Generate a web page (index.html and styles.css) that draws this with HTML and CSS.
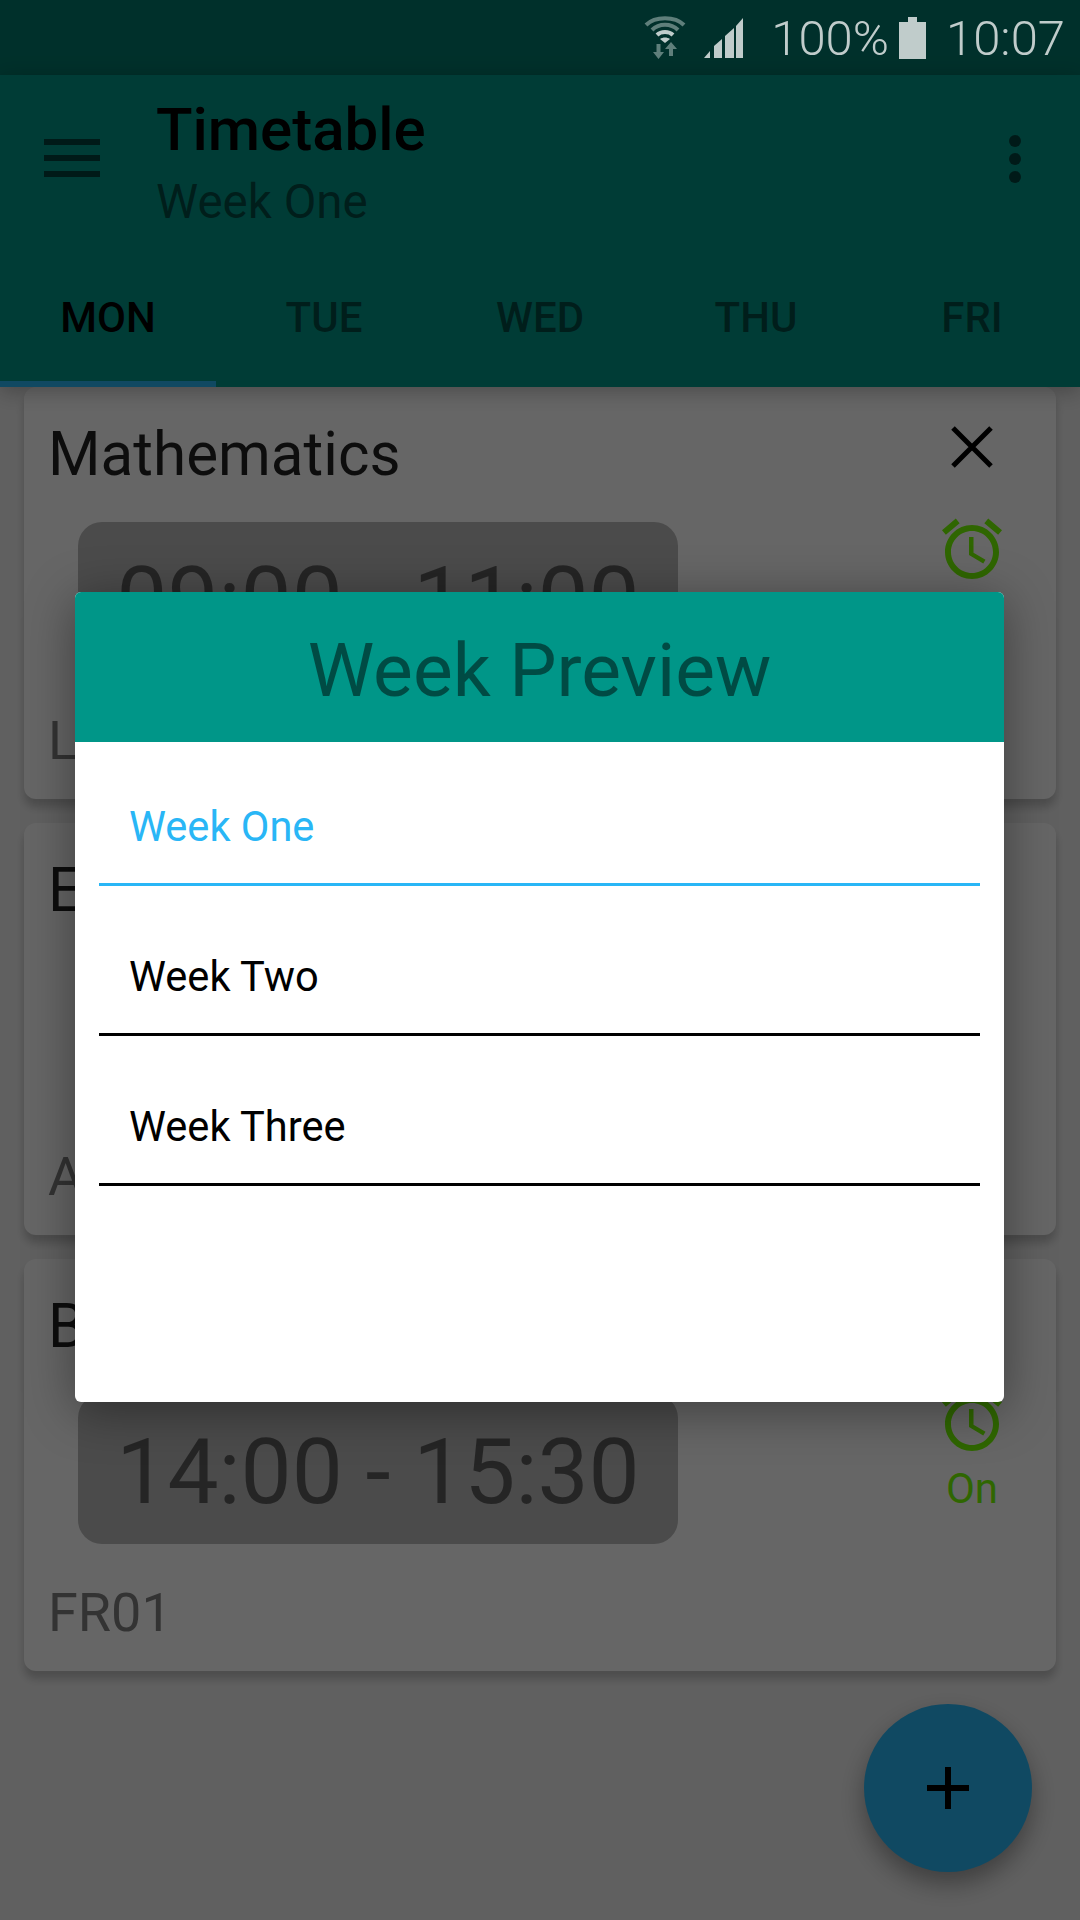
FILE: index.html
```html
<!DOCTYPE html>
<html lang="en">
<head>
  <meta charset="UTF-8">
  <meta name="viewport" content="width=device-width, initial-scale=1.0">
  <title>Timetable</title>
  <link rel="stylesheet" href="styles.css">
</head>
<body>
  <div class="status-bar">
    <svg class="icon-wifi" viewBox="0 0 42 44" width="42" height="44">
      <path class="wifi-dim" d="M2 9 C11 0 31 0 40 9" />
      <path class="wifi-dim" d="M8 14 C15 7 27 7 34 14" />
      <path class="wifi-inner" d="M13 19 C17 15 25 15 29 19" />
      <path class="wifi-dot" d="M21 27 L16 23 C19 21 23 21 26 23 Z" />
      <path class="wifi-arrow" d="M14.5 43 L9 36 H12.5 V28 H16.5 V36 H20 Z" />
      <path class="wifi-arrow" d="M27 26 L33 33 H29 V40 H25 V33 H21 Z" />
    </svg>
    <svg class="icon-signal" viewBox="0 0 40 40" width="40" height="40">
      <path d="M1 40 L7 33 V40 Z" />
      <path d="M11 40 V28 L19 21 V40 Z" />
      <path d="M22 40 V18 L31 10 V40 Z" />
      <path d="M33 40 V8 L40 0 V40 Z" />
    </svg>
    <span class="status-text battery-text">100%</span>
    <svg class="icon-battery" viewBox="0 0 27 42" width="27" height="42">
      <path d="M9 0 H18 V5 H27 V42 H0 V5 H9 Z" />
    </svg>
    <span class="status-text time-text">10:07</span>
  </div>

  <header class="app-bar">
    <div class="toolbar">
      <div class="menu-icon"><span></span><span></span><span></span></div>
      <div class="toolbar-titles">
        <div class="toolbar-title">Timetable</div>
        <div class="toolbar-subtitle">Week One</div>
      </div>
      <div class="more-icon"><span></span><span></span><span></span></div>
    </div>
    <nav class="tabs">
      <div class="tab active">MON</div>
      <div class="tab">TUE</div>
      <div class="tab">WED</div>
      <div class="tab">THU</div>
      <div class="tab">FRI</div>
    </nav>
  </header>

  <main class="card-list">
    <section class="card">
      <div class="card-main">
        <div class="card-title">Mathematics</div>
        <div class="time-box">09:00 - 11:00</div>
        <div class="card-room">L12</div>
      </div>
      <div class="card-side">
        <svg class="icon-close" viewBox="0 0 42 42" width="42" height="42"><path d="M2 2 L40 40 M40 2 L2 40" /></svg>
        <svg class="icon-alarm" viewBox="0 0 24 24" width="72" height="72"><path d="M22 5.72l-4.6-3.86-1.29 1.53 4.6 3.86L22 5.72zM7.88 3.39L6.6 1.86 2 5.71l1.29 1.53 4.59-3.85zM12.5 8H11v6l4.75 2.85.75-1.23-4-2.37V8zM12 4c-4.97 0-9 4.03-9 9s4.03 9 9 9 9-4.03 9-9-4.03-9-9-9zm0 16c-3.87 0-7-3.13-7-7s3.13-7 7-7 7 3.13 7 7-3.13 7-7 7z" /></svg>
        <div class="alarm-label">On</div>
      </div>
    </section>
    <section class="card">
      <div class="card-main">
        <div class="card-title">English</div>
        <div class="time-box">11:30 - 13:00</div>
        <div class="card-room">A03</div>
      </div>
      <div class="card-side">
        <svg class="icon-close" viewBox="0 0 42 42" width="42" height="42"><path d="M2 2 L40 40 M40 2 L2 40" /></svg>
        <svg class="icon-alarm" viewBox="0 0 24 24" width="72" height="72"><path d="M22 5.72l-4.6-3.86-1.29 1.53 4.6 3.86L22 5.72zM7.88 3.39L6.6 1.86 2 5.71l1.29 1.53 4.59-3.85zM12.5 8H11v6l4.75 2.85.75-1.23-4-2.37V8zM12 4c-4.97 0-9 4.03-9 9s4.03 9 9 9 9-4.03 9-9-4.03-9-9-9zm0 16c-3.87 0-7-3.13-7-7s3.13-7 7-7 7 3.13 7 7-3.13 7-7 7z" /></svg>
        <div class="alarm-label">On</div>
      </div>
    </section>
    <section class="card">
      <div class="card-main">
        <div class="card-title">Biology</div>
        <div class="time-box">14:00 - 15:30</div>
        <div class="card-room">FR01</div>
      </div>
      <div class="card-side">
        <svg class="icon-close" viewBox="0 0 42 42" width="42" height="42"><path d="M2 2 L40 40 M40 2 L2 40" /></svg>
        <svg class="icon-alarm" viewBox="0 0 24 24" width="72" height="72"><path d="M22 5.72l-4.6-3.86-1.29 1.53 4.6 3.86L22 5.72zM7.88 3.39L6.6 1.86 2 5.71l1.29 1.53 4.59-3.85zM12.5 8H11v6l4.75 2.85.75-1.23-4-2.37V8zM12 4c-4.97 0-9 4.03-9 9s4.03 9 9 9 9-4.03 9-9-4.03-9-9-9zm0 16c-3.87 0-7-3.13-7-7s3.13-7 7-7 7 3.13 7 7-3.13 7-7 7z" /></svg>
        <div class="alarm-label">On</div>
      </div>
    </section>
  </main>

  <button class="fab"><span class="fab-plus"></span></button>

  <div class="scrim"></div>

  <div class="dialog">
    <div class="dialog-header">Week Preview</div>
    <div class="dialog-body">
      <div class="week-row selected">Week One</div>
      <div class="week-row">Week Two</div>
      <div class="week-row">Week Three</div>
    </div>
  </div>
</body>
</html>
```

FILE: styles.css
```css
* {
  box-sizing: border-box;
}

body {
  margin: 0;
  width: 1080px;
  height: 1920px;
  position: relative;
  overflow: hidden;
  background-color: #f0f0f0;
  font-family: Roboto, "Noto Sans", sans-serif;
  color: #000;
}

/* status bar */
.status-bar {
  height: 75px;
  background-color: #00796b;
  display: flex;
  align-items: center;
  justify-content: flex-end;
  padding-right: 15px;
}

/* it sits above the scrim in the real screenshot, so its icons stay light */
.status-bar svg {
  fill: #c0cccb;
  position: relative;
  z-index: 20;
}

.icon-wifi {
  margin-right: 17px;
}

.icon-wifi path {
  fill: none;
  stroke-width: 4;
}

.icon-wifi .wifi-dim {
  stroke: #5f7f7b;
}

.icon-wifi .wifi-inner {
  stroke: #c0cccb;
}

.icon-wifi .wifi-dot {
  fill: #c0cccb;
  stroke: none;
}

.icon-wifi .wifi-arrow {
  fill: #5f7f7b;
  stroke: none;
}

.icon-signal {
  margin-right: 28px;
}

.status-text {
  position: relative;
  z-index: 20;
  font-size: 49px;
  font-weight: 300;
  color: #c0cccb;
  margin-top: 2px;
}

.battery-text {
  margin-right: 10px;
}

.icon-battery {
  margin-right: 20px;
}

/* app bar */
.app-bar {
  height: 312px;
  background-color: #009688;
  position: relative;
  z-index: 2;
  box-shadow: 0 4px 20px rgba(0, 0, 0, 0.28);
}

.toolbar {
  height: 168px;
  display: flex;
  align-items: flex-start;
  padding-left: 44px;
  padding-right: 59px;
}

.menu-icon {
  width: 56px;
  margin-top: 64px;
  display: flex;
  flex-direction: column;
  gap: 10px;
}

.menu-icon span {
  display: block;
  height: 6px;
  background-color: rgba(0, 0, 0, 0.55);
}

.toolbar-titles {
  margin-left: 56px;
  flex: 1;
  padding-top: 23px;
}

.toolbar-title {
  font-size: 60px;
  font-weight: 500;
  line-height: 64px;
}

.toolbar-subtitle {
  font-size: 47.5px;
  line-height: 56px;
  margin-top: 12px;
  color: rgba(0, 0, 0, 0.5);
}

.more-icon {
  margin-top: 60px;
  display: flex;
  flex-direction: column;
  gap: 6px;
}

.more-icon span {
  width: 12px;
  height: 12px;
  border-radius: 50%;
  background-color: rgba(0, 0, 0, 0.55);
}

.tabs {
  height: 144px;
  display: flex;
}

.tab {
  flex: 1;
  display: flex;
  align-items: center;
  justify-content: center;
  font-size: 42px;
  font-weight: 500;
  padding-top: 10px;
  color: rgba(0, 0, 0, 0.5);
  border-bottom: 6px solid transparent;
}

.tab.active {
  color: #000;
  border-bottom-color: #29b6f6;
}

/* cards */
.card-list {
  display: flex;
  flex-direction: column;
  gap: 24px;
  padding: 0 24px;
}

.card {
  height: 412px;
  background-color: #fff;
  border-radius: 12px;
  box-shadow: 0 8px 8px rgba(0, 0, 0, 0.2);
  display: flex;
  padding: 0 24px;
}

.card-main {
  flex: 1;
}

.card-title {
  font-size: 60.2px;
  line-height: 64px;
  margin-top: 36px;
  color: rgba(0, 0, 0, 0.87);
}

.time-box {
  width: 600px;
  height: 150px;
  margin-top: 35px;
  margin-left: 30px;
  background-color: #bcbcbc;
  border-radius: 24px;
  text-align: center;
  font-size: 91px;
  line-height: 157px;
  color: rgba(0, 0, 0, 0.5);
}

.card-room {
  font-size: 54px;
  line-height: 56px;
  margin-top: 41px;
  color: rgba(0, 0, 0, 0.5);
}

.card-side {
  width: 120px;
  display: flex;
  flex-direction: column;
  align-items: center;
}

.icon-close {
  margin-top: 39px;
  fill: none;
  stroke: #000;
  stroke-width: 5;
}

.icon-alarm {
  margin-top: 45px;
  fill: #76ff03;
}

.alarm-label {
  font-size: 42px;
  line-height: 48px;
  margin-top: 8px;
  color: #76ff03;
}

/* floating action button */
.fab {
  position: absolute;
  left: 864px;
  top: 1704px;
  width: 168px;
  height: 168px;
  padding: 0;
  border: none;
  border-radius: 50%;
  background-color: #29b6f6;
  box-shadow: 0 12px 24px rgba(0, 0, 0, 0.35);
  display: flex;
  align-items: center;
  justify-content: center;
}

.fab-plus {
  position: relative;
  display: block;
  width: 42px;
  height: 42px;
  background:
    linear-gradient(#000, #000) center / 6px 42px no-repeat,
    linear-gradient(#000, #000) center / 42px 6px no-repeat;
}

/* dialog */
.scrim {
  position: absolute;
  inset: 0;
  z-index: 10;
  background-color: rgba(0, 0, 0, 0.6);
}

.dialog {
  position: absolute;
  left: 75px;
  top: 592px;
  width: 929px;
  height: 810px;
  z-index: 11;
  background-color: #fff;
  border-radius: 6px;
  box-shadow: 0 8px 50px rgba(0, 0, 0, 0.4);
}

.dialog-header {
  height: 150px;
  background-color: #009688;
  border-radius: 6px 6px 0 0;
  display: flex;
  align-items: center;
  justify-content: center;
  padding-top: 6px;
  font-size: 75px;
  color: rgba(0, 0, 0, 0.5);
}

.dialog-body {
  padding: 0 24px;
}

.week-row {
  height: 150px;
  padding-left: 30px;
  padding-top: 66px;
  font-size: 41.6px;
  line-height: 50px;
  border-bottom: 3px solid #000;
}

.week-row.selected {
  height: 144px;
  padding-top: 60px;
  color: #29b6f6;
  border-bottom-color: #29b6f6;
}
```
